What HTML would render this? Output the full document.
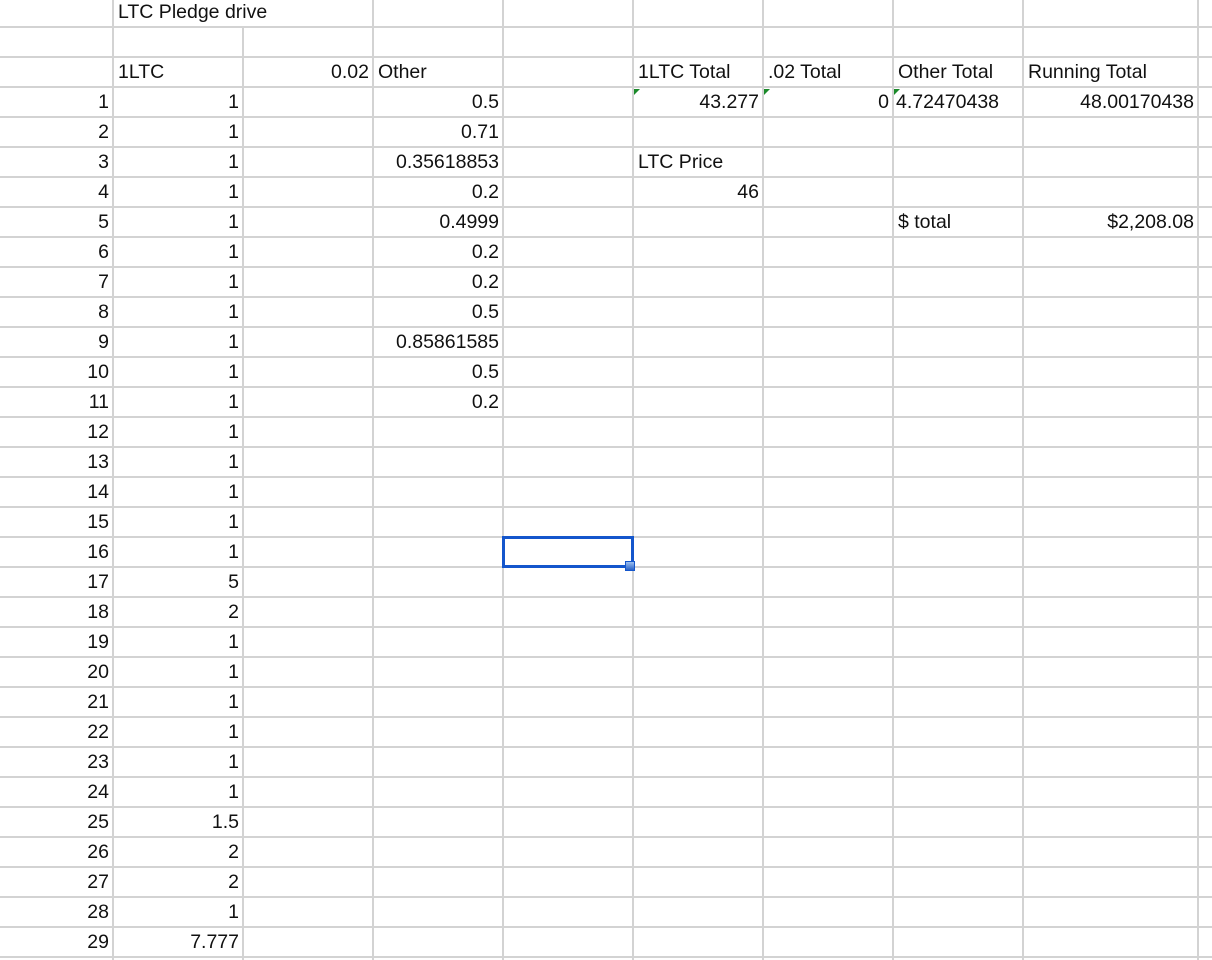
<!DOCTYPE html>
<html style="overflow:hidden;height:960px"><head><meta charset="utf-8"><style>
body{margin:0;width:1212px;height:960px;background:#fff;position:relative;overflow:hidden;font-family:"Liberation Sans",Arial,sans-serif;color:#111}
.h{position:absolute;left:0;width:1212px;height:2px;background:#d3d3d3}
.v{position:absolute;width:2px;background:#d3d3d3;top:0;height:960px}
.c{position:absolute;height:30px;line-height:31px;font-size:19.5px;white-space:nowrap}
.r{text-align:right}
.tri{position:absolute;width:0;height:0;border-top:6px solid #1a8a2a;border-right:6px solid transparent}
</style></head><body>
<div class="h" style="top:26px"></div>
<div class="h" style="top:56px"></div><div class="h" style="top:86px"></div><div class="h" style="top:116px"></div><div class="h" style="top:146px"></div><div class="h" style="top:176px"></div><div class="h" style="top:206px"></div><div class="h" style="top:236px"></div><div class="h" style="top:266px"></div><div class="h" style="top:296px"></div><div class="h" style="top:326px"></div><div class="h" style="top:356px"></div><div class="h" style="top:386px"></div><div class="h" style="top:416px"></div><div class="h" style="top:446px"></div><div class="h" style="top:476px"></div><div class="h" style="top:506px"></div><div class="h" style="top:536px"></div><div class="h" style="top:566px"></div><div class="h" style="top:596px"></div><div class="h" style="top:626px"></div><div class="h" style="top:656px"></div><div class="h" style="top:686px"></div><div class="h" style="top:716px"></div><div class="h" style="top:746px"></div><div class="h" style="top:776px"></div><div class="h" style="top:806px"></div><div class="h" style="top:836px"></div><div class="h" style="top:866px"></div><div class="h" style="top:896px"></div><div class="h" style="top:926px"></div><div class="h" style="top:956px"></div>
<div class="v" style="left:112px"></div>
<div class="v" style="left:242px;top:27px;height:933px"></div>
<div class="v" style="left:372px"></div>
<div class="v" style="left:502px"></div>
<div class="v" style="left:632px"></div>
<div class="v" style="left:762px"></div>
<div class="v" style="left:892px"></div>
<div class="v" style="left:1022px"></div>
<div class="v" style="left:1197px"></div>

<div class="c" style="left:118px;top:-3px;height:27px">LTC Pledge drive</div>
<div class="c" style="left:118px;top:57px">1LTC</div>
<div class="c r" style="left:243px;width:126px;top:57px">0.02</div>
<div class="c" style="left:378px;top:57px">Other</div>
<div class="c" style="left:638px;top:57px">1LTC Total</div>
<div class="c" style="left:768px;top:57px">.02 Total</div>
<div class="c" style="left:898px;top:57px">Other Total</div>
<div class="c" style="left:1028px;top:57px">Running Total</div>

<div class="tri" style="left:634px;top:89px"></div>
<div class="tri" style="left:764px;top:89px"></div>
<div class="tri" style="left:894px;top:89px"></div>
<div class="c r" style="left:633px;width:126px;top:87px">43.277</div>
<div class="c r" style="left:763px;width:126px;top:87px">0</div>
<div class="c" style="left:896px;top:87px">4.72470438</div>
<div class="c r" style="left:1023px;width:171px;top:87px">48.00170438</div>
<div class="c" style="left:638px;top:147px">LTC Price</div>
<div class="c r" style="left:633px;width:126px;top:177px">46</div>
<div class="c" style="left:898px;top:207px">$ total</div>
<div class="c r" style="left:1023px;width:171px;top:207px">$2,208.08</div>

<div class="c r" style="left:0;width:109px;top:87px">1</div><div class="c r" style="left:113px;width:126px;top:87px">1</div><div class="c r" style="left:373px;width:126px;top:87px">0.5</div>
<div class="c r" style="left:0;width:109px;top:117px">2</div><div class="c r" style="left:113px;width:126px;top:117px">1</div><div class="c r" style="left:373px;width:126px;top:117px">0.71</div>
<div class="c r" style="left:0;width:109px;top:147px">3</div><div class="c r" style="left:113px;width:126px;top:147px">1</div><div class="c r" style="left:373px;width:126px;top:147px">0.35618853</div>
<div class="c r" style="left:0;width:109px;top:177px">4</div><div class="c r" style="left:113px;width:126px;top:177px">1</div><div class="c r" style="left:373px;width:126px;top:177px">0.2</div>
<div class="c r" style="left:0;width:109px;top:207px">5</div><div class="c r" style="left:113px;width:126px;top:207px">1</div><div class="c r" style="left:373px;width:126px;top:207px">0.4999</div>
<div class="c r" style="left:0;width:109px;top:237px">6</div><div class="c r" style="left:113px;width:126px;top:237px">1</div><div class="c r" style="left:373px;width:126px;top:237px">0.2</div>
<div class="c r" style="left:0;width:109px;top:267px">7</div><div class="c r" style="left:113px;width:126px;top:267px">1</div><div class="c r" style="left:373px;width:126px;top:267px">0.2</div>
<div class="c r" style="left:0;width:109px;top:297px">8</div><div class="c r" style="left:113px;width:126px;top:297px">1</div><div class="c r" style="left:373px;width:126px;top:297px">0.5</div>
<div class="c r" style="left:0;width:109px;top:327px">9</div><div class="c r" style="left:113px;width:126px;top:327px">1</div><div class="c r" style="left:373px;width:126px;top:327px">0.85861585</div>
<div class="c r" style="left:0;width:109px;top:357px">10</div><div class="c r" style="left:113px;width:126px;top:357px">1</div><div class="c r" style="left:373px;width:126px;top:357px">0.5</div>
<div class="c r" style="left:0;width:109px;top:387px">11</div><div class="c r" style="left:113px;width:126px;top:387px">1</div><div class="c r" style="left:373px;width:126px;top:387px">0.2</div>
<div class="c r" style="left:0;width:109px;top:417px">12</div><div class="c r" style="left:113px;width:126px;top:417px">1</div>
<div class="c r" style="left:0;width:109px;top:447px">13</div><div class="c r" style="left:113px;width:126px;top:447px">1</div>
<div class="c r" style="left:0;width:109px;top:477px">14</div><div class="c r" style="left:113px;width:126px;top:477px">1</div>
<div class="c r" style="left:0;width:109px;top:507px">15</div><div class="c r" style="left:113px;width:126px;top:507px">1</div>
<div class="c r" style="left:0;width:109px;top:537px">16</div><div class="c r" style="left:113px;width:126px;top:537px">1</div>
<div class="c r" style="left:0;width:109px;top:567px">17</div><div class="c r" style="left:113px;width:126px;top:567px">5</div>
<div class="c r" style="left:0;width:109px;top:597px">18</div><div class="c r" style="left:113px;width:126px;top:597px">2</div>
<div class="c r" style="left:0;width:109px;top:627px">19</div><div class="c r" style="left:113px;width:126px;top:627px">1</div>
<div class="c r" style="left:0;width:109px;top:657px">20</div><div class="c r" style="left:113px;width:126px;top:657px">1</div>
<div class="c r" style="left:0;width:109px;top:687px">21</div><div class="c r" style="left:113px;width:126px;top:687px">1</div>
<div class="c r" style="left:0;width:109px;top:717px">22</div><div class="c r" style="left:113px;width:126px;top:717px">1</div>
<div class="c r" style="left:0;width:109px;top:747px">23</div><div class="c r" style="left:113px;width:126px;top:747px">1</div>
<div class="c r" style="left:0;width:109px;top:777px">24</div><div class="c r" style="left:113px;width:126px;top:777px">1</div>
<div class="c r" style="left:0;width:109px;top:807px">25</div><div class="c r" style="left:113px;width:126px;top:807px">1.5</div>
<div class="c r" style="left:0;width:109px;top:837px">26</div><div class="c r" style="left:113px;width:126px;top:837px">2</div>
<div class="c r" style="left:0;width:109px;top:867px">27</div><div class="c r" style="left:113px;width:126px;top:867px">2</div>
<div class="c r" style="left:0;width:109px;top:897px">28</div><div class="c r" style="left:113px;width:126px;top:897px">1</div>
<div class="c r" style="left:0;width:109px;top:927px">29</div><div class="c r" style="left:113px;width:126px;top:927px">7.777</div>

<div style="position:absolute;left:502px;top:536px;width:126px;height:26px;border:3px solid #1456cc"></div>
<div style="position:absolute;left:625px;top:561px;width:8px;height:8px;background:linear-gradient(#9cc0f0,#2a62c8);border:1px solid #1456cc"></div>
</body></html>
